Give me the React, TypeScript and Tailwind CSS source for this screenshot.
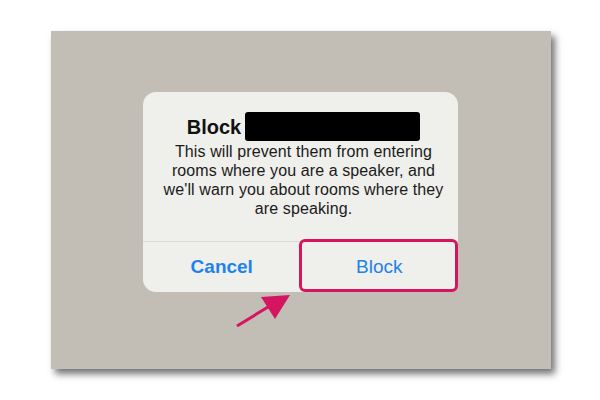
export default function App() {
  return (
    <div className="w-[600px] h-[400px] bg-white overflow-hidden pt-[31px] pl-[51px]" style={{ fontFamily: '"Liberation Sans", Arial, sans-serif' }}>
      {/* Screenshot panel */}
      <div className="relative w-[500px] h-[338px] bg-[#c2beb6] shadow-[4px_5px_7px_rgba(0,0,0,0.55)] pt-[61px] pl-[92px]">
        {/* Alert */}
        <div className="relative w-[315px] h-[200px] bg-[#efefeb] rounded-[13px] flex flex-col">
          <div className="flex-1 flex flex-col items-center pt-[20px] pl-[6px]">
            <div className="flex items-center gap-[4px] h-[29px]">
              <span className="text-[20px] font-bold text-[#111]">Block</span>
              <span className="block w-[175px] h-[29px] bg-black rounded-[3px]" />
            </div>
            <p className="mt-[1px] text-center text-[16px] leading-[19px] tracking-[0.1px] text-[#1b1b1b] whitespace-nowrap">
              This will prevent them from entering
              <br />
              rooms where you are a speaker, and
              <br />
              we'll warn you about rooms where they
              <br />
              are speaking.
            </p>
          </div>
          <div className="h-[51px] border-t border-[#d9d9d5] grid grid-cols-2">
            <button className="text-[19px] font-bold text-[#1f82ea]">Cancel</button>
            <button className="text-[19px] text-[#1f82ea]">Block</button>
          </div>
          {/* Highlight */}
          <div className="absolute left-[156px] top-[147px] w-[159px] h-[53px] border-[3px] border-[#d5155f] rounded-[6px]" />
        </div>
        {/* Arrow */}
        <svg className="absolute left-0 top-0" width="500" height="338" viewBox="0 0 500 338">
          <line x1="186" y1="295" x2="222" y2="273" stroke="#d5155f" strokeWidth="3" />
          <polygon points="239,264 210,266 224,288" fill="#d5155f" />
        </svg>
      </div>
    </div>
  );
}
